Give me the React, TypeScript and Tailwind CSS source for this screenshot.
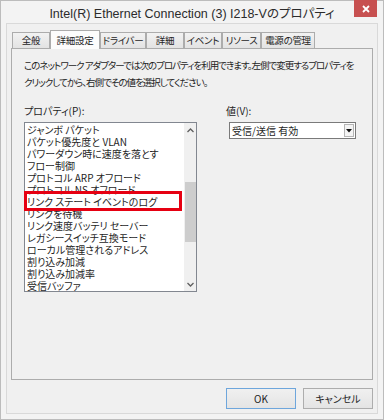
import React from "react";

const tabs = [
  { label: "全般", w: "w-[38px]" },
  { label: "詳細設定", w: "w-[50px]", active: true },
  { label: "ドライバー", w: "w-[46px]" },
  { label: "詳細", w: "w-[38px]" },
  { label: "イベント", w: "w-[38px]" },
  { label: "リソース", w: "w-[39px]" },
  { label: "電源の管理", w: "w-[54px]" },
];

const props = [
  "ジャンボ パケット",
  "パケット優先度と VLAN",
  "パワーダウン時に速度を落とす",
  "フロー制御",
  "プロトコル ARP オフロード",
  "プロトコル NS オフロード",
  "リンク ステート イベントのログ",
  "リンクを待機",
  "リンク速度バッテリ セーバー",
  "レガシースイッチ互換モード",
  "ローカル管理されるアドレス",
  "割り込み加減",
  "割り込み加減率",
  "受信バッファ",
];

export default function App() {
  return (
    <div className="w-[384px] h-[420px] bg-[#f3f3f3] border border-[#bcbcbc] flex flex-col text-[#1e1e1e] font-['Noto_Sans_CJK_JP',sans-serif] [font-feature-settings:'palt']">
      {/* title bar */}
      <div className="h-[22px] relative flex items-center justify-center pt-[5px]">
        <span className="text-[12.5px] text-[#2b2b2b] whitespace-nowrap font-['Liberation_Sans','Noto_Sans_CJK_JP',sans-serif]">
          Intel(R) Ethernet Connection (3) I218-Vのプロパティ
        </span>
        <div className="absolute right-[6px] top-[-1px] w-[23px] h-[17px] bg-[#c75050] flex items-center justify-center">
          <svg width="8" height="8" viewBox="0 0 8 8">
            <path d="M1 1L7 7M7 1L1 7" stroke="#fff" strokeWidth="1.8" />
          </svg>
        </div>
      </div>

      {/* client area */}
      <div className="mx-[5px] mb-[5px] flex-1 bg-[#f0f0f0] border border-[#d9d9d9] flex flex-col">
        {/* tabs */}
        <div className="flex items-end pl-[5px] pt-[6px] h-[24px] text-[9.5px] tracking-[-0.3px]">
          {tabs.map((t) =>
            t.active ? (
              <div
                key={t.label}
                className={`${t.w} h-[19px] -mb-px relative z-10 bg-[#fcfcfc] border border-b-0 border-[#acacac] flex items-center justify-center whitespace-nowrap`}
              >
                {t.label}
              </div>
            ) : (
              <div
                key={t.label}
                className={`${t.w} h-[16px] bg-gradient-to-b from-[#f2f2f2] to-[#e3e3e3] border border-b-0 border-[#acacac] flex items-center justify-center whitespace-nowrap`}
              >
                {t.label}
              </div>
            )
          )}
        </div>

        {/* panel */}
        <div className="mx-[4px] h-[332px] border border-[#acacac] bg-[#f0f0f0] px-[12px] pt-[8px] text-[10px]">
          <p className="leading-[17px] whitespace-nowrap text-[9.5px] tracking-[-1px]">
            このネットワーク アダプターでは次のプロパティを利用できます。左側で変更するプロパティを
            <br />
            クリックしてから、右側でその値を選択してください。
          </p>

          <div className="flex mt-[14px]">
            <div className="w-[173px]">
              <div className="leading-[12px] h-[12px]">プロパティ(P):</div>
              <div className="mt-[5px] h-[170px] relative bg-white border border-[#828790] flex">
                <div className="flex-1 overflow-hidden pt-[1px] pl-[2px]">
                  {props.map((p) => (
                    <div key={p} className="h-[12px] leading-[12px] whitespace-nowrap">
                      {p}
                    </div>
                  ))}
                </div>
                {/* scrollbar */}
                <div className="w-[12px] bg-[#f0f0f0] flex flex-col items-center">
                  <div className="h-[14px] flex items-center justify-center">
                    <svg width="7" height="5" viewBox="0 0 7 5">
                      <path d="M0.5 4L3.5 1L6.5 4" stroke="#606060" strokeWidth="1.3" fill="none" />
                    </svg>
                  </div>
                  <div className="mt-[45px] w-[11px] h-[60px] bg-[#cdcdcd]" />
                  <div className="flex-1" />
                  <div className="h-[14px] flex items-center justify-center">
                    <svg width="7" height="5" viewBox="0 0 7 5">
                      <path d="M0.5 1L3.5 4L6.5 1" stroke="#606060" strokeWidth="1.3" fill="none" />
                    </svg>
                  </div>
                </div>
                {/* highlight box */}
                <div className="absolute left-[-1px] top-[68px] w-[158px] h-[20px] border-[3px] border-[#e60012]" />
              </div>
            </div>

            <div className="ml-[29px]">
              <div className="leading-[12px] h-[12px]">値(V):</div>
              <div className="mt-[5px] ml-[3px] w-[127px] h-[17px] bg-white border border-[#7a7a7a] flex items-center pl-[2px]">
                <span className="flex-1">受信/送信 有効</span>
                <div className="w-[10px] h-[13px] mr-[1px] bg-[#f4f4f4] border border-[#b5b5b5] flex items-center justify-center">
                  <svg width="6" height="4" viewBox="0 0 6 4">
                    <path d="M0 0H6L3 3.5Z" fill="#111" />
                  </svg>
                </div>
              </div>
            </div>
          </div>
        </div>

        {/* buttons */}
        <div className="flex justify-end gap-[7px] pr-[4px] mt-[8px] text-[10px]">
          <button className="w-[70px] h-[21px] border border-[#6ea6dc] bg-gradient-to-b from-[#f0f0f0] to-[#e4e4e4] font-['Noto_Sans_CJK_JP',sans-serif]">
            OK
          </button>
          <button className="w-[70px] h-[21px] border border-[#adadad] bg-gradient-to-b from-[#f0f0f0] to-[#e4e4e4] font-['Noto_Sans_CJK_JP',sans-serif]">
            キャンセル
          </button>
        </div>
      </div>
    </div>
  );
}
